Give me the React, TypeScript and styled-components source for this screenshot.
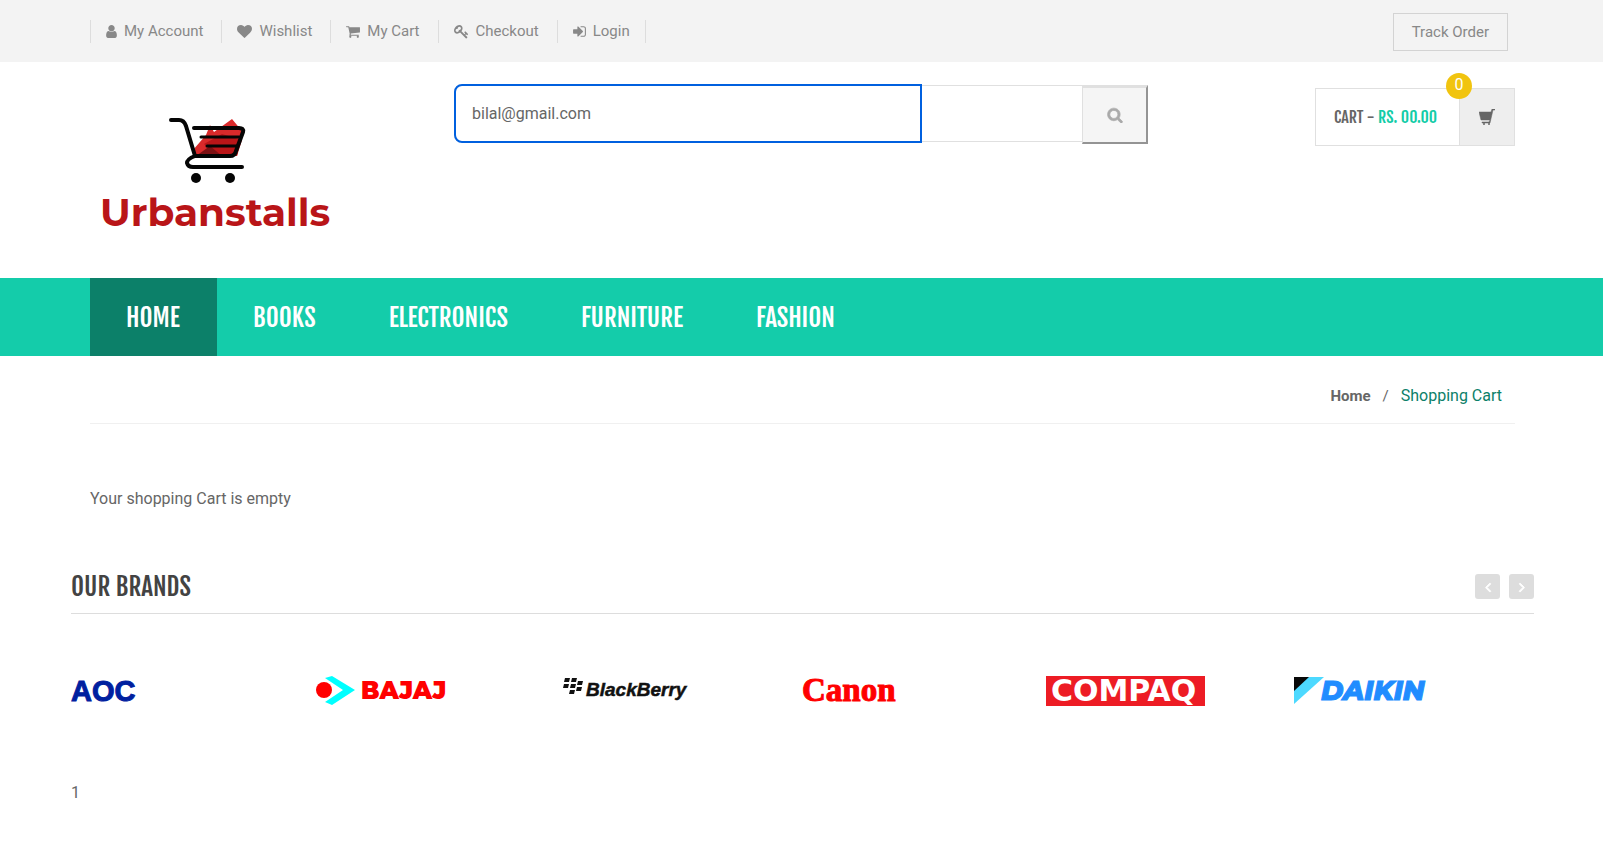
import React from "react";
import styled, { createGlobalStyle } from "styled-components";

const condensed = `"Fjalla One", "Liberation Sans Narrow", "Roboto Condensed", sans-serif`;

const GlobalStyle = createGlobalStyle`
  *, *::before, *::after { box-sizing: border-box; }
  body {
    margin: 0;
    background: #fff;
    color: #666;
    font: 16px/24px Roboto, sans-serif;
  }
  a { color: inherit; text-decoration: none; }
  ul, ol { list-style: none; margin: 0; padding: 0; }
  svg { display: block; flex: none; }
`;

const Container = styled.div`
  padding: 0 69px 0 71px;
`;

const Inner = styled.div`
  padding: 0 19px;
`;

const TopBar = styled.div`
  background: #f3f3f3;
  color: #888;
  font-size: 15px;
`;

const TopRow = styled(Inner)`
  display: flex;
  justify-content: space-between;
  align-items: center;
  height: 62px;
`;

const AccountLinks = styled.ul`
  display: flex;
  border-left: 1px solid #ddd;
`;

const AccountItem = styled.li`
  display: flex;
  height: 23px;
  padding: 0 18px 0 15px;
  border-right: 1px solid #ddd;
  &:last-child { padding-right: 15px; }
`;

const AccountLink = styled.a`
  display: flex;
  align-items: center;
  gap: 7px;
  line-height: 22px;
`;

const TrackButton = styled.a`
  margin: 2px 7px 0 0;
  padding: 0 18px;
  border: 1px solid #d3d3d3;
  line-height: 36px;
`;

const Header = styled(Inner)`
  display: flex;
  align-items: flex-start;
  height: 216px;
`;

const LogoArea = styled.a`
  flex: 0 0 364px;
  padding: 51px 0 0 10px;
  color: #b91518;
`;

const LogoDrawing = styled.svg`
  margin-left: 66px;
`;

const LogoName = styled.span`
  display: block;
  font: 700 39px/50px Montserrat, Inter, sans-serif;
`;

const SearchForm = styled.form`
  display: flex;
  flex: 0 0 694px;
  height: 57px;
  margin-top: 23px;
  border: 1px solid #e0e0e0;
  border-radius: 6px 0 0 6px;
`;

const SearchInput = styled.input`
  flex: 0 0 468px;
  height: 59px;
  margin: -2px 0 0 -1px;
  padding: 0 16px;
  border: 2px solid #0060df;
  border-radius: 8px 0 0 8px;
  outline: none;
  background: #fff;
  color: #666;
  font: inherit;
`;

const SearchButton = styled.button`
  display: flex;
  align-items: center;
  justify-content: center;
  width: 66px;
  height: 59px;
  margin: -1px -1px 0 auto;
  border: solid;
  border-width: 3px 2px 2px 1px;
  border-color: #e0e0e0 #949494 #949494 #e0e0e0;
  background: #f5f5f5;
  color: #aaa;
`;

const CartBox = styled.a`
  position: relative;
  display: flex;
  width: 200px;
  height: 58px;
  margin: 26px 0 0 auto;
  border: 1px solid #e0e0e0;
  font: 400 16px/56px ${condensed};
`;

const CartText = styled.span`
  flex: 1;
  padding-left: 18px;
  white-space: nowrap;
`;

const CartTotal = styled.span`
  color: #12cca7;
`;

const CartIconCell = styled.span`
  display: flex;
  align-items: center;
  justify-content: center;
  width: 55px;
  border-left: 1px solid #e0e0e0;
  background: #eee;
`;

const CartBadge = styled.span`
  position: absolute;
  top: -16px;
  right: 42px;
  width: 26px;
  height: 26px;
  border-radius: 50%;
  background: #f1c40f;
  color: #fff;
  font: 16px/23px Roboto, sans-serif;
  text-align: center;
`;

const NavBar = styled.nav`
  background: #14ccaa;
`;

const NavList = styled.ul`
  display: flex;
  padding: 0 19px;
`;

const NavItem = styled.li<{ $active?: boolean }>`
  height: 78px;
  padding: 0 37px 0 36px;
  background: ${(p) => (p.$active ? "#0c8069" : "transparent")};
  color: #fff;
  font: 400 25px/80px ${condensed};
`;

const Breadcrumb = styled.ol`
  display: flex;
  justify-content: flex-end;
  gap: 12px;
  margin: 0 19px;
  padding: 28px 13px 15px 0;
  border-bottom: 1px solid #f0f0f0;
`;

const Crumb = styled.li<{ $current?: boolean }>`
  color: ${(p) => (p.$current ? "#0c8069" : "#666")};
  font-size: ${(p) => (p.$current ? 16 : 15)}px;
  font-weight: ${(p) => (p.$current ? 400 : 700)};
`;

const Slash = styled.li`
  font-size: 15px;
`;

const EmptyMessage = styled.p`
  margin: 0;
  padding: 63px 19px 55px;
`;

const BrandsHead = styled.div`
  display: flex;
  align-items: center;
  justify-content: space-between;
  height: 48px;
  padding-bottom: 6px;
  border-bottom: 1px solid #ddd;
`;

const BrandsTitle = styled.h3`
  margin: 0;
  color: #434343;
  font: 400 25px/36px ${condensed};
`;

const Arrows = styled.div`
  display: flex;
  gap: 9px;
`;

const ArrowButton = styled.button`
  display: flex;
  align-items: center;
  justify-content: center;
  width: 25px;
  height: 25px;
  padding: 0;
  border: 0;
  border-radius: 3px;
  background: #ddd;
  color: #fff;
`;

const BrandList = styled.ul`
  display: grid;
  grid-template-columns: repeat(6, 1fr);
  padding: 56px 0 69px;
`;

const BrandLogo = styled.svg`
  width: 166px;
  height: 42px;
`;

const paths = {
  user: "M1536 1399q0 109-62.5 187t-150.5 78h-854q-88 0-150.5-78t-62.5-187q0-85 8.5-160.5t31.5-152 58.5-131 94-89 134.5-34.5q131 128 313 128t313-128q76 0 134.5 34.5t94 89 58.5 131 31.5 152 8.5 160.5zm-256-887q0 159-112.5 271.5t-271.5 112.5-271.5-112.5-112.5-271.5 112.5-271.5 271.5-112.5 271.5 112.5 112.5 271.5z",
  heart: "M896 1664q-26 0-44-18l-624-602q-10-8-27.5-26t-55.5-65.5-68-97.5-53.5-121-23.5-138q0-220 127-344t351-124q62 0 126.5 21.5t120 58 95.5 68.5 76 68q36-36 76-68t95.5-68.5 120-58 126.5-21.5q224 0 351 124t127 344q0 221-229 450l-623 600q-18 18-44 18z",
  cart: "M704 1536q0 52-38 90t-90 38-90-38-38-90 38-90 90-38 90 38 38 90zm896 0q0 52-38 90t-90 38-90-38-38-90 38-90 90-38 90 38 38 90zm128-1088v512q0 24-16.5 42.5t-40.5 21.5l-1044 122q13 60 13 70 0 16-24 64h920q26 0 45 19t19 45-19 45-45 19h-1024q-26 0-45-19t-19-45q0-11 8-31.5t16-36 21.5-40 15.5-29.5l-177-823h-204q-26 0-45-19t-19-45 19-45 45-19h256q16 0 28.5 6.5t19.5 15.5 13 24.5 8 26 5.5 29.5 4.5 26h1201q26 0 45 19t19 45z",
  key: "M832 512q0-80-56-136t-136-56-136 56-56 136q0 42 19 83-41-19-83-19-80 0-136 56t-56 136 56 136 136 56 136-56 56-136q0-42-19-83 41 19 83 19 80 0 136-56t56-136zm851 704q0 17-49 66t-66 49q-9 0-28.5-16t-36.5-33-38.5-40-24.5-26l-96 96 220 220q28 28 28 68 0 42-39 81t-81 39q-40 0-68-28l-671-671q-176 131-365 131-163 0-265.5-102.5t-102.5-265.5q0-160 95-313t248-248 313-95q163 0 265.5 102.5t102.5 265.5q0 189-131 365l355 355 96-96q-3-3-26-24.5t-40-38.5-33-36.5-16-28.5q0-17 49-66t66-49q13 0 23 10 6 6 46 44.5t82 79.5 86.5 86 73 78 28.5 41z",
  login: "M1312 896q0 26-19 45l-544 544q-19 19-45 19t-45-19-19-45v-288h-448q-26 0-45-19t-19-45v-384q0-26 19-45t45-19h448v-288q0-26 19-45t45-19 45 19l544 544q19 19 19 45zm352-352v704q0 119-84.5 203.5t-203.5 84.5h-320q-13 0-22.5-9.5t-9.5-22.5q0-4-1-20t-.5-26.5 3-23.5 10-19.5 20.5-6.5h320q66 0 113-47t47-113v-704q0-66-47-113t-113-47h-312l-11.5-1-11.5-3-8-5.5-7-9-2-13.5q0-4-1-20t-.5-26.5 3-23.5 10-19.5 20.5-6.5h320q119 0 203.5 84.5t84.5 203.5z",
  search: "M1216 832q0-185-131.5-316.5t-316.5-131.5-316.5 131.5-131.5 316.5 131.5 316.5 316.5 131.5 316.5-131.5 131.5-316.5zm512 832q0 52-38 90t-90 38q-54 0-90-38l-343-342q-179 124-399 124-143 0-273.5-55.5t-225-150-150-225-55.5-273.5 55.5-273.5 150-225 225-150 273.5-55.5 273.5 55.5 225 150 150 225 55.5 273.5q0 220-124 399l343 343q37 37 37 90z",
  left: "M1203 544q0 13-10 23l-393 393 393 393q10 10 10 23t-10 23l-50 50q-10 10-23 10t-23-10l-466-466q-10-10-10-23t10-23l466-466q10-10 23-10t23 10l50 50q10 10 10 23z",
  right: "M1171 960q0 13-10 23l-466 466q-10 10-23 10t-23-10l-50-50q-10-10-10-23t10-23l393-393-393-393q-10-10-10-23t10-23l50-50q10-10 23-10t23 10l466 466q10 10 10 23z",
};

type IconProps = { name: keyof typeof paths; size?: number; crop?: number; stroke?: number };

function Icon({ name, size = 15, crop = 0, stroke = 0 }: IconProps) {
  const span = 1792 - 2 * crop;
  return (
    <svg
      width={Math.round((size * span) / 1792)}
      height={size}
      viewBox={`${crop} 0 ${span} 1792`}
      fill="currentColor"
      stroke="currentColor"
      strokeWidth={stroke}
      aria-hidden="true"
    >
      <path d={paths[name]} />
    </svg>
  );
}

const accountLinks: { label: string; icon: keyof typeof paths; crop: number }[] = [
  { label: "My Account", icon: "user", crop: 256 },
  { label: "Wishlist", icon: "heart", crop: 0 },
  { label: "My Cart", icon: "cart", crop: 64 },
  { label: "Checkout", icon: "key", crop: 0 },
  { label: "Login", icon: "login", crop: 128 },
];

const navItems = ["HOME", "BOOKS", "ELECTRONICS", "FURNITURE", "FASHION"];

function CartLogo() {
  return (
    <LogoDrawing width="80" height="74" viewBox="0 0 80 74" fill="none" aria-hidden="true">
      <path d="M27 37 40 22 44 12 48 19 66 6 76 18 71 43H29Z" fill="#d92a2b" />
      <path d="M38 31 56 21 76 27 71 43H50Z" fill="#b91518" />
      <path d="M30 43 44 33 56 43Z" fill="#7c1013" />
      <path d="M5 7H13Q18 7 20 13L29 43H64Q69 43 70 38L77 19Q78 15 73 15H28M29 43Q21 46 21 50Q22 54 27 54H76" stroke="#050505" strokeWidth="4" strokeLinecap="round" strokeLinejoin="round" />
      <path d="M35 24H73M41 33H71" stroke="#050505" strokeWidth="3" strokeLinecap="round" />
      <circle cx="30" cy="65" r="5" fill="#050505" />
      <circle cx="64" cy="65" r="5" fill="#050505" />
    </LogoDrawing>
  );
}

function Brands() {
  return (
    <BrandList>
      <li>
        <BrandLogo role="img" aria-label="AOC">
          <text x="0" y="31" fill="#00209f" stroke="#00209f" fontFamily="Liberation Sans, sans-serif" fontWeight="700" fontSize="29">AOC</text>
        </BrandLogo>
      </li>
      <li>
        <BrandLogo role="img" aria-label="Bajaj">
          <path d="M10 8 17 6 40 20 17 35 10 32 28 20Z" fill="#0ff" />
          <circle cx="9" cy="20" r="8" fill="red" />
          <text x="46" y="29" fill="red" fontFamily="Montserrat, DejaVu Sans, sans-serif" fontWeight="900" fontSize="24">BAJAJ</text>
        </BrandLogo>
      </li>
      <li>
        <BrandLogo role="img" aria-label="BlackBerry">
          <path d="M6 8h5l-1 4H5ZM13 8h5l-1 4h-5ZM5 14h5l-1 4H4ZM12 14h5l-1 4h-5ZM19 11h5l-1 4h-5ZM18 17h5l-1 4h-5ZM11 20h5l-1 4h-5Z" fill="#111" />
          <text x="27" y="26" fill="#111" stroke="#111" strokeWidth="0.5" fontFamily="Liberation Sans, sans-serif" fontStyle="italic" fontWeight="700" fontSize="19">BlackBerry</text>
        </BrandLogo>
      </li>
      <li>
        <BrandLogo role="img" aria-label="Canon">
          <text x="0" y="31" fill="red" stroke="red" fontFamily="Liberation Serif, serif" fontWeight="700" fontSize="33">Canon</text>
        </BrandLogo>
      </li>
      <li>
        <BrandLogo role="img" aria-label="Compaq">
          <path d="M0 6H159V36H0Z" fill="#ed1c24" />
          <text x="5" y="31" fill="#fff" fontFamily="DejaVu Sans, sans-serif" fontWeight="700" fontSize="30">COMPAQ</text>
        </BrandLogo>
      </li>
      <li>
        <BrandLogo role="img" aria-label="Daikin">
          <path d="M4 7H34L4 34Z" fill="#4dd9ff" />
          <path d="M4 7H19L4 21Z" fill="#080808" />
          <text x="31" y="30" fill="#218cff" stroke="#218cff" fontFamily="Montserrat, DejaVu Sans, sans-serif" fontStyle="italic" fontWeight="800" fontSize="27">DAIKIN</text>
        </BrandLogo>
      </li>
    </BrandList>
  );
}

export default function App() {
  return (
    <>
      <GlobalStyle />
      <TopBar>
        <Container>
          <TopRow>
            <AccountLinks>
              {accountLinks.map((link) => (
                <AccountItem key={link.label}>
                  <AccountLink href="#">
                    <Icon name={link.icon} crop={link.crop} />
                    {link.label}
                  </AccountLink>
                </AccountItem>
              ))}
            </AccountLinks>
            <TrackButton href="#">Track Order</TrackButton>
          </TopRow>
        </Container>
      </TopBar>
      <Container as="header">
        <Header>
          <LogoArea href="#">
            <CartLogo />
            <LogoName>Urbanstalls</LogoName>
          </LogoArea>
          <SearchForm role="search">
            <SearchInput aria-label="Search" defaultValue="bilal@gmail.com" />
            <SearchButton type="button" aria-label="Search">
              <Icon name="search" size={16} stroke={80} />
            </SearchButton>
          </SearchForm>
          <CartBox href="#">
            <CartText>
              CART - <CartTotal>RS. 00.00</CartTotal>
            </CartText>
            <CartIconCell>
              <svg width="16" height="17" viewBox="0 0 16 17" aria-hidden="true">
                <path d="M0 3H12L13 0H16V1H14L11 14H3V13H10L11 11H2Z" fill="#666" stroke="#666" strokeWidth="0.5" />
                <circle cx="5" cy="15" r="1" fill="#666" />
                <circle cx="10" cy="15" r="1" fill="#666" />
              </svg>
            </CartIconCell>
            <CartBadge>0</CartBadge>
          </CartBox>
        </Header>
      </Container>
      <NavBar>
        <Container>
          <NavList>
            {navItems.map((label, i) => (
              <NavItem key={label} $active={i === 0}>
                <a href="#">{label}</a>
              </NavItem>
            ))}
          </NavList>
        </Container>
      </NavBar>
      <Container as="main">
        <Breadcrumb>
          <Crumb><a href="#">Home</a></Crumb>
          <Slash>/</Slash>
          <Crumb $current>Shopping Cart</Crumb>
        </Breadcrumb>
        <EmptyMessage>Your shopping Cart is empty</EmptyMessage>
        <section>
          <BrandsHead>
            <BrandsTitle>OUR BRANDS</BrandsTitle>
            <Arrows>
              <ArrowButton aria-label="Previous"><Icon name="left" size={16} stroke={100} /></ArrowButton>
              <ArrowButton aria-label="Next"><Icon name="right" size={16} stroke={100} /></ArrowButton>
            </Arrows>
          </BrandsHead>
          <Brands />
        </section>
        <div>1</div>
      </Container>
    </>
  );
}
